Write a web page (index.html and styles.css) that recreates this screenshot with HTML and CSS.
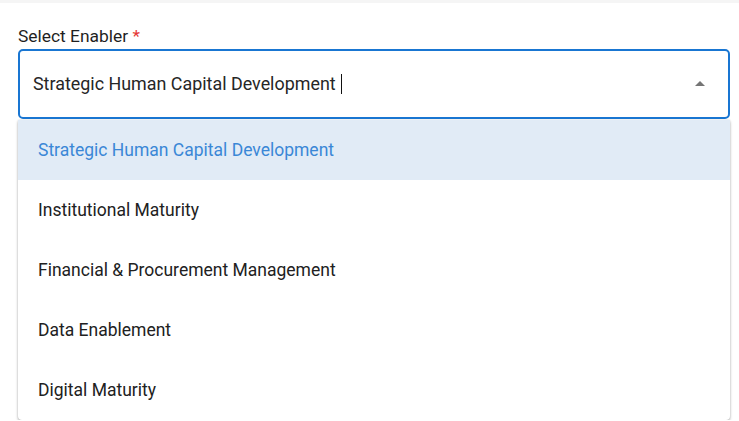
FILE: index.html
```html
<!DOCTYPE html>
<html lang="en">
<head>
<meta charset="utf-8">
<title>Select Enabler</title>
<link rel="stylesheet" href="styles.css">
</head>
<body>
<div class="topbar"></div>
<div class="field">
  <label class="label">Select Enabler <span class="req">*</span></label>
  <div class="input">
    <span class="value">Strategic Human Capital Development</span><span class="caret"></span>
    <svg class="arrow" width="24" height="24" viewBox="0 0 24 24"><path d="M7 14l5-5 5 5z" fill="#757575"/></svg>
  </div>
  <ul class="menu">
    <li class="item selected">Strategic Human Capital Development</li>
    <li class="item">Institutional Maturity</li>
    <li class="item">Financial &amp; Procurement Management</li>
    <li class="item">Data Enablement</li>
    <li class="item">Digital Maturity</li>
  </ul>
</div>
</body>
</html>
```
FILE: styles.css
```css
html, body {
  margin: 0;
  padding: 0;
  background: #ffffff;
  font-family: Roboto, "Liberation Sans", sans-serif;
  color: #212121;
}
.topbar {
  height: 3px;
  background: #f5f5f5;
}
.field {
  padding: 21px 9px 0 18px;
  display: flex;
  flex-direction: column;
}
.label {
  font-size: 17.4px;
  line-height: 24px;
  margin-bottom: 1px;
  color: #1f1f1f;
}
.req {
  color: #e53935;
}
.input {
  height: 66px;
  border: 2px solid #1976d2;
  border-radius: 5px;
  display: flex;
  align-items: center;
  padding: 0 16px 0 13px;
}
.value {
  font-size: 17.9px;
  color: #262626;
  line-height: 22px;
}
.caret {
  width: 1px;
  height: 20px;
  background: #111;
  margin-left: 5px;
}
.arrow {
  margin-left: auto;
  margin-top: -1px;
}
.menu {
  list-style: none;
  margin: 1px 0 0 0;
  padding: 0;
  background: #fff;
  border-radius: 0 0 4px 4px;
  box-shadow: 0 2px 3px rgba(0,0,0,0.25), 0 0 2px rgba(0,0,0,0.18);
}
.item {
  height: 60px;
  display: flex;
  align-items: center;
  padding-left: 20px;
  font-size: 17.5px;
  color: #212121;
}
.item.selected {
  background: #e1ebf6;
  color: #3a87d6;
}
```
